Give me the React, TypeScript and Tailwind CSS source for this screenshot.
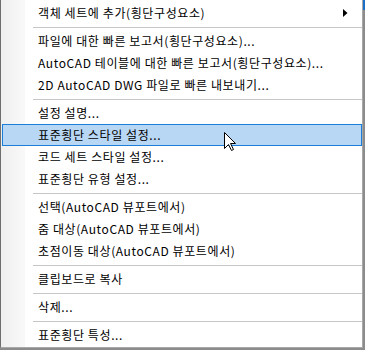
import React from "react";

type Item = { type: "item"; label: string; sub?: boolean; hl?: boolean } | { type: "sep" };

const items: Item[] = [
  { type: "item", label: "객체 세트에 추가(횡단구성요소)", sub: true },
  { type: "sep" },
  { type: "item", label: "파일에 대한 빠른 보고서(횡단구성요소)..." },
  { type: "item", label: "AutoCAD 테이블에 대한 빠른 보고서(횡단구성요소)..." },
  { type: "item", label: "2D AutoCAD DWG 파일로 빠른 내보내기..." },
  { type: "sep" },
  { type: "item", label: "설정 설명..." },
  { type: "item", label: "표준횡단 스타일 설정...", hl: true },
  { type: "item", label: "코드 세트 스타일 설정..." },
  { type: "item", label: "표준횡단 유형 설정..." },
  { type: "sep" },
  { type: "item", label: "선택(AutoCAD 뷰포트에서)" },
  { type: "item", label: "줌 대상(AutoCAD 뷰포트에서)" },
  { type: "item", label: "초점이동 대상(AutoCAD 뷰포트에서)" },
  { type: "sep" },
  { type: "item", label: "클립보드로 복사" },
  { type: "sep" },
  { type: "item", label: "삭제..." },
  { type: "sep" },
  { type: "item", label: "표준횡단 특성..." },
];

export default function App() {
  return (
    <div
      className="relative w-[365px] h-[350px] bg-[#8c8c8c] overflow-hidden"
      style={{ fontFamily: '"Noto Sans CJK KR", "Noto Sans", sans-serif' }}
    >
      <div className="absolute right-0 top-0 w-[2px] h-[10px] bg-[#1c6fc4]" />
      <div className="w-[363px] h-[348px] border-l border-r border-b border-l-[#6e6e6e] border-r-[#a8a8a8] border-b-[#a8a8a8] bg-[linear-gradient(to_right,#efefef_0px,#f9f9f9_24px,#ffffff_24px)] pt-[2px] flex flex-col">
        {items.map((it, i) =>
          it.type === "sep" ? (
            <div key={i} className="h-[6px] flex items-center pl-[32px]">
              <div className="h-px w-full bg-[#c6c6c6]" />
            </div>
          ) : (
            <div
              key={i}
              className={
                "h-[22px] flex items-center pl-[35px] pr-[12px] text-[12px] tracking-[0.6px] text-black leading-none ml-[1px] " +
                (it.hl ? "bg-[#b8d7f4] border border-[#1b7fd9]" : "border border-transparent")
              }
            >
              <span className="flex-1 whitespace-nowrap">{it.label}</span>
              {it.sub && (
                <svg width="5" height="8" viewBox="0 0 5 8" className="mr-[1px]">
                  <path d="M0 0 L4.5 4 L0 8 Z" fill="#000" />
                </svg>
              )}
            </div>
          )
        )}
      </div>
      <svg
        width="13"
        height="20"
        viewBox="0 0 13 20"
        className="absolute left-[224px] top-[132px]"
      >
        <path
          d="M0.5 0.5 L0.5 16.5 L4.5 12.5 L7.5 18.5 L9.5 17.5 L6.5 11.5 L11.5 11.5 Z"
          fill="#fff"
          stroke="#000"
          strokeWidth="1"
        />
      </svg>
    </div>
  );
}
